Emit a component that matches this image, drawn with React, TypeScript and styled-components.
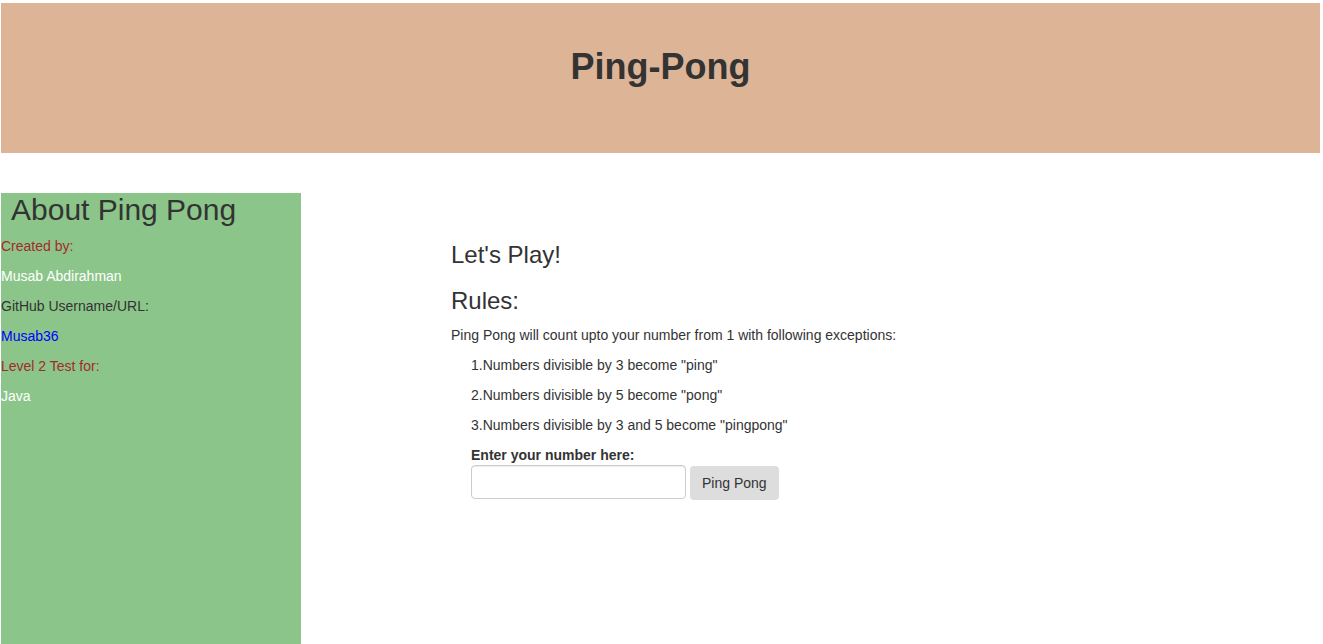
import styled, { createGlobalStyle } from 'styled-components';

const GlobalStyle = createGlobalStyle`
  * {
    box-sizing: border-box;
  }

  body {
    margin: 0;
    font-family: 'Liberation Sans', Arial, Helvetica, sans-serif;
    font-size: 14px;
    line-height: 20px;
    color: #333;
    background: #fff;
  }
`;

const Page = styled.div`
  padding: 3px 3px 0 1px;
`;

const Header = styled.header`
  height: 150px;
  padding-top: 44px;
  background: #deb497;
  text-align: center;
`;

const Title = styled.h1`
  margin: 0;
  font-size: 36px;
  line-height: 1.1;
  font-weight: 700;
`;

const Body = styled.div`
  display: flex;
  margin-top: 40px;
`;

const Sidebar = styled.aside`
  width: 300px;
  height: 480px;
  flex-shrink: 0;
  background: #8bc58a;
`;

const SideTitle = styled.h2`
  margin: 0 0 10px;
  padding-left: 10px;
  font-size: 30px;
  line-height: 1.1;
  font-weight: 500;
`;

const Line = styled.p<{ $tone?: 'brown' | 'white' | 'dark' }>`
  margin: 0 0 10px;
  color: ${(p) =>
    p.$tone === 'brown' ? '#a52a2a' : p.$tone === 'white' ? '#fff' : '#333'};
`;

const Link = styled.a`
  color: #00f;
  text-decoration: none;
`;

const Main = styled.main`
  padding: 29px 0 0 150px;
`;

const Heading = styled.h3`
  margin: 20px 0 10px;
  font-size: 24px;
  line-height: 1.1;
  font-weight: 500;
`;

const Text = styled.p`
  margin: 0 0 10px;
`;

const Indented = styled.div`
  padding-left: 20px;
`;

const Label = styled.label`
  display: block;
  font-weight: 700;
`;

const Form = styled.form`
  display: flex;
  align-items: flex-start;
  gap: 4px;
`;

const Input = styled.input`
  width: 215px;
  height: 34px;
  padding: 6px 12px;
  border: 1px solid #ccc;
  border-radius: 4px;
  font: inherit;
  box-shadow: inset 0 1px 1px rgba(0, 0, 0, 0.075);
`;

const Button = styled.button`
  height: 34px;
  margin-top: 1px;
  padding: 6px 12px;
  border: none;
  border-radius: 4px;
  background: #ddd;
  color: #333;
  font: inherit;
`;

const rules = [
  '1.Numbers divisible by 3 become "ping"',
  '2.Numbers divisible by 5 become "pong"',
  '3.Numbers divisible by 3 and 5 become "pingpong"',
];

export default function App() {
  return (
    <>
      <GlobalStyle />
      <Page>
        <Header>
          <Title>Ping-Pong</Title>
        </Header>
        <Body>
          <Sidebar>
            <SideTitle>About Ping Pong</SideTitle>
            <Line $tone="brown">Created by:</Line>
            <Line $tone="white">Musab Abdirahman</Line>
            <Line>GitHub Username/URL:</Line>
            <Line>
              <Link href="#">Musab36</Link>
            </Line>
            <Line $tone="brown">Level 2 Test for:</Line>
            <Line $tone="white">Java</Line>
          </Sidebar>
          <Main>
            <Heading>Let's Play!</Heading>
            <Heading>Rules:</Heading>
            <Text>Ping Pong will count upto your number from 1 with following exceptions:</Text>
            <Indented>
              {rules.map((r) => (
                <Text key={r}>{r}</Text>
              ))}
              <Label htmlFor="number">Enter your number here:</Label>
              <Form onSubmit={(e) => e.preventDefault()}>
                <Input id="number" type="text" />
                <Button type="submit">Ping Pong</Button>
              </Form>
            </Indented>
          </Main>
        </Body>
      </Page>
    </>
  );
}
